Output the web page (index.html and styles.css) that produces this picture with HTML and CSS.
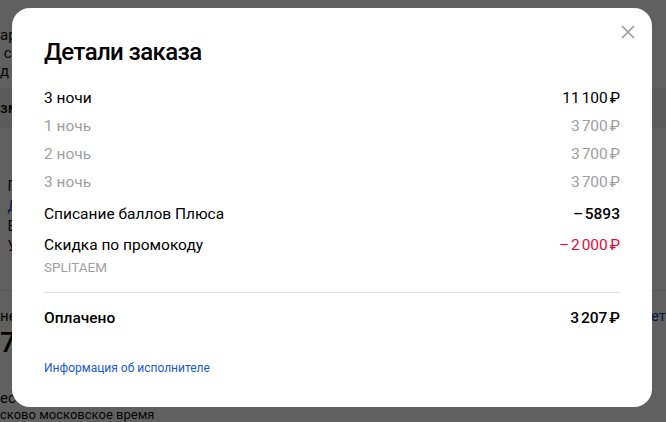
FILE: index.html
```html
<!DOCTYPE html>
<html lang="ru">
<head>
<meta charset="utf-8">
<title>Детали заказа</title>
<link rel="stylesheet" href="styles.css">
</head>
<body>
<div class="page">
  <div class="pg-block pg-top">
    <div class="pg-line">ар</div>
    <div class="pg-line">&nbsp;с</div>
    <div class="pg-line">д д</div>
  </div>
  <div class="pg-band"><span class="pg-line">зм</span></div>
  <div class="pg-block pg-mid">
    <div class="pg-line">&nbsp;&nbsp;П</div>
    <div class="pg-line pg-blue">&nbsp;&nbsp;Д</div>
    <div class="pg-line">&nbsp;&nbsp;В</div>
    <div class="pg-line">&nbsp;&nbsp;У</div>
  </div>
  <div class="pg-sep"></div>
  <div class="pg-row"><span class="pg-line">не</span><span class="pg-line pg-blue">ет</span></div>
  <div class="pg-big">7</div>
  <div class="pg-line pg-low">ес</div>
  <div class="pg-line pg-bottom">сково московское время</div>
</div>

<div class="overlay">
  <div class="modal">
    <button class="close" aria-label="Закрыть">
      <svg width="14" height="14" viewBox="0 0 14 14"><path d="M1 1L13 13M13 1L1 13" stroke="#9a9a9e" stroke-width="1.6" fill="none"/></svg>
    </button>
    <h1 class="title">Детали заказа</h1>
    <div class="rows">
      <div class="row"><span>3 ночи</span><span>11&#8239;100&#8239;₽</span></div>
      <div class="row muted"><span>1 ночь</span><span>3&#8239;700&#8239;₽</span></div>
      <div class="row muted"><span>2 ночь</span><span>3&#8239;700&#8239;₽</span></div>
      <div class="row muted"><span>3 ночь</span><span>3&#8239;700&#8239;₽</span></div>
      <div class="row gap-row"><span>Списание баллов Плюса</span><span class="strong">–&#8239;5893</span></div>
      <div class="row gap-row2"><span>Скидка по промокоду</span><span class="red">–&#8239;2&#8239;000&#8239;₽</span></div>
      <div class="promo">SPLITAEM</div>
    </div>
    <div class="divider"></div>
    <div class="row total"><span>Оплачено</span><span>3&#8239;207&#8239;₽</span></div>
    <a class="info" href="#">Информация об исполнителе</a>
  </div>
</div>
</body>
</html>
```

FILE: styles.css
```css
* { box-sizing: border-box; }
html, body { margin: 0; padding: 0; }
body {
  width: 666px;
  height: 422px;
  overflow: hidden;
  background: #fff;
  font-family: Roboto, "Liberation Sans", sans-serif;
  color: #000;
}
.page {
  height: 422px;
  overflow: hidden;
  font-size: 15px;
}
.pg-line { line-height: 18px; color: #111; white-space: nowrap; }
.pg-blue { color: #1a3fc8; }
.pg-top { padding-top: 26px; }
.pg-band {
  margin-top: 8px;
  height: 40px;
  display: flex;
  align-items: center;
  background: #f2f2f2;
  font-weight: 500;
}
.pg-mid { padding-top: 48px; }
.pg-mid .pg-line { line-height: 20px; }
.pg-sep { margin-top: 34px; height: 1px; background: #e5e5e5; }
.pg-row { margin-top: 16px; display: flex; justify-content: space-between; }
.pg-big { margin-top: 4px; font-size: 28px; line-height: 28px; font-weight: 500; }
.pg-low { margin-top: 32px; }
.pg-bottom { margin-top: 0; font-size: 13px; line-height: 16px; }

.overlay {
  position: fixed;
  inset: 0;
  background: rgba(0, 0, 0, 0.625);
  padding: 8px 14px 15px 12px;
  display: flex;
}
.modal {
  position: relative;
  flex: 1;
  background: #fff;
  border-radius: 18px;
  padding: 28px 32px 0 32px;
  display: flex;
  flex-direction: column;
}
.close {
  position: absolute;
  top: 17px;
  right: 17px;
  width: 14px;
  height: 14px;
  padding: 0;
  border: 0;
  background: none;
  display: flex;
}
.title {
  margin: 0 0 16px;
  font-size: 24px;
  line-height: 32px;
  font-weight: 500;
  letter-spacing: -0.6px;
  color: #000;
}
.row {
  display: flex;
  justify-content: space-between;
  font-size: 15.5px;
  line-height: 28px;
  color: #000;
}
.muted { color: #9e9e9e; }
.gap-row { margin-top: 4px; }
.gap-row2 { margin-top: 3px; }
.strong { font-weight: 500; }
.red { color: #eb0a3c; }
.promo {
  font-size: 13.5px;
  line-height: 16px;
  color: #a0a0a0;
}
.divider {
  margin-top: 17px;
  height: 1px;
  background: #e6e6e6;
}
.total {
  margin-top: 11px;
  font-weight: 500;
}
.info {
  margin-top: 28px;
  font-size: 12px;
  line-height: 16px;
  color: #1a5ad6;
  text-decoration: none;
  align-self: flex-start;
}
```
